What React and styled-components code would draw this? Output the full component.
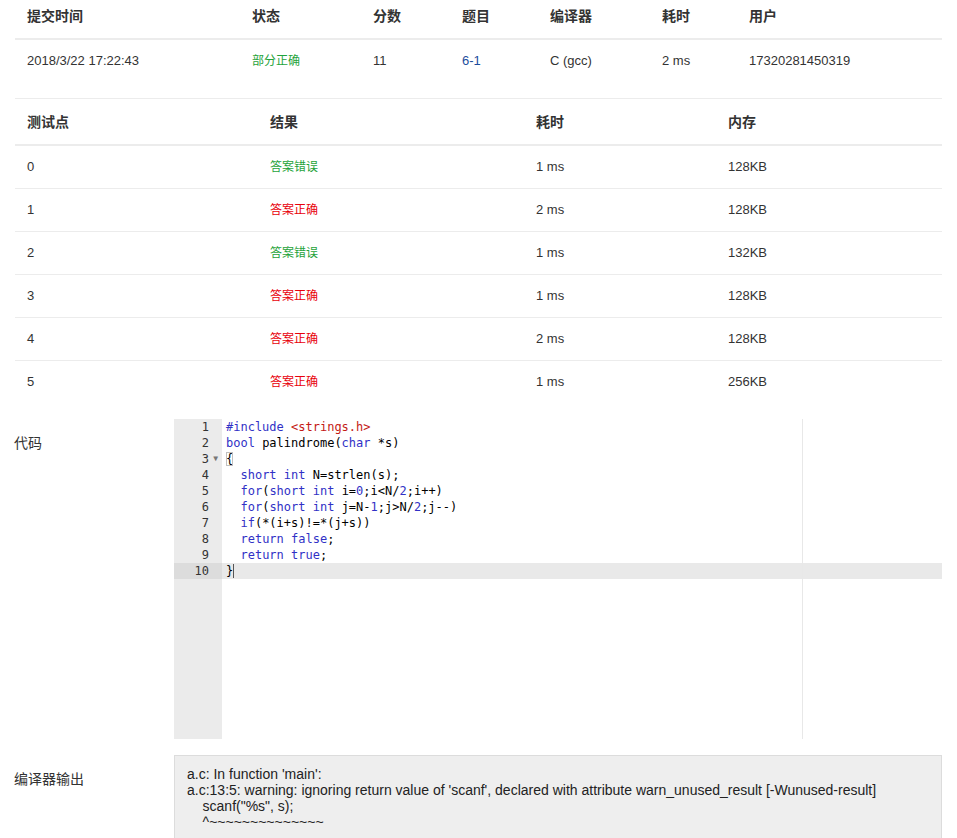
import React from "react";
import styled, { createGlobalStyle } from "styled-components";

const GlobalStyle = createGlobalStyle`
  body {
    margin: 0;
    background: #fff;
    font-family: "Liberation Sans", "Noto Sans CJK SC", sans-serif;
    color: #333;
  }
`;

const Page = styled.div`
  width: 927px;
  padding: 0 15px 40px;
`;

const Grid = styled.div`
  display: grid;
  grid-template-columns: ${(p) => p.cols};
`;

const HeadCell = styled.div`
  padding: ${(p) => p.pad};
  font-size: 14px;
  font-weight: 600;
  line-height: 20px;
  color: #333;
  border-bottom: 2px solid #ececec;
  white-space: nowrap;
`;

const Cell = styled.div`
  padding: ${(p) => p.pad};
  font-size: 13px;
  line-height: 20px;
  color: #333;
  border-bottom: ${(p) => (p.last ? "none" : "1px solid #ececec")};
  white-space: nowrap;
`;

const Status = styled.span`
  font-size: 12px;
  color: ${(p) => (p.tone === "red" ? "#e8000b" : "#1fa33b")};
`;

const Link = styled.a`
  color: #1c4d9c;
  text-decoration: none;
`;

const Section = styled.div`
  display: grid;
  grid-template-columns: 159px 1fr;
  margin-top: 16px;
`;

const Label = styled.div`
  padding-top: 14px;
  margin-left: -1px;
  font-size: 14px;
  line-height: 20px;
  color: #333;
`;

const Editor = styled.div`
  display: flex;
  height: 320px;
  background: #fff;
  font-family: "DejaVu Sans Mono", monospace;
  font-size: 12px;
`;

const Gutter = styled.div`
  width: 48px;
  flex: none;
  background: #ebebeb;
`;

const GutterCell = styled.div`
  position: relative;
  height: 16px;
  line-height: 16px;
  text-align: right;
  padding-right: 13px;
  color: #333;
  background: ${(p) => (p.active ? "#dcdcdc" : "transparent")};
`;

const Fold = styled.span`
  position: absolute;
  right: 4px;
  top: 0;
  font-size: 8px;
  color: #777;
`;

const CodeArea = styled.div`
  position: relative;
  flex: 1;
`;

const PrintMargin = styled.div`
  position: absolute;
  top: 0;
  bottom: 0;
  left: 580px;
  width: 1px;
  background: #e8e8e8;
`;

const Line = styled.div`
  height: 16px;
  line-height: 16px;
  padding-left: 4px;
  white-space: pre;
  color: #000;
  background: ${(p) => (p.active ? "#e9e9e9" : "transparent")};
`;

const Tok = styled.span`
  color: ${(p) =>
    p.k === "k" ? "#3131c6" : p.k === "s" ? "#c41a16" : p.k === "n" ? "#3131c6" : "#000"};
`;

const Bracket = styled.span`
  outline: 1px solid #c0c0c0;
  outline-offset: -1px;
`;

const Cursor = styled.span`
  display: inline-block;
  width: 0;
  height: 14px;
  vertical-align: -3px;
  border-left: 1px solid #555;
`;

const Output = styled.pre`
  margin: 0;
  min-height: 100px;
  padding: 10px 12px;
  background: #eee;
  border: 1px solid #dcdcdc;
  font-family: "Liberation Sans Narrow", "Liberation Sans", sans-serif;
  font-size: 14px;
  line-height: 16px;
  color: #222;
  white-space: pre-wrap;
`;

const summaryCols = "225px 121px 89px 88px 112px 87px 1fr";
const caseCols = "243px 266px 192px 1fr";

const code = [
  [["#include", "k"], " ", ["<strings.h>", "s"]],
  [["bool", "k"], " palindrome(", ["char", "k"], " *s)"],
  ["BRACKET"],
  ["  ", ["short", "k"], " ", ["int", "k"], " N=strlen(s);"],
  ["  ", ["for", "k"], "(", ["short", "k"], " ", ["int", "k"], " i=", ["0", "n"], ";i<N/", ["2", "n"], ";i++)"],
  ["  ", ["for", "k"], "(", ["short", "k"], " ", ["int", "k"], " j=N-", ["1", "n"], ";j>N/", ["2", "n"], ";j--)"],
  ["  ", ["if", "k"], "(*(i+s)!=*(j+s))"],
  ["  ", ["return", "k"], " ", ["false", "k"], ";"],
  ["  ", ["return", "k"], " ", ["true", "k"], ";"],
  ["}", "CURSOR"],
];

const cases = [
  ["0", "答案错误", "green", "1 ms", "128KB"],
  ["1", "答案正确", "red", "2 ms", "128KB"],
  ["2", "答案错误", "green", "1 ms", "132KB"],
  ["3", "答案正确", "red", "1 ms", "128KB"],
  ["4", "答案正确", "red", "2 ms", "128KB"],
  ["5", "答案正确", "red", "1 ms", "256KB"],
];

const renderTok = (t, i) => {
  if (t === "BRACKET") return <Bracket key={i}>{"{"}</Bracket>;
  if (t === "CURSOR") return <Cursor key={i} />;
  if (typeof t === "string") return <Tok key={i}>{t}</Tok>;
  return (
    <Tok key={i} k={t[1]}>
      {t[0]}
    </Tok>
  );
};

const outputText = `a.c: In function 'main':
a.c:13:5: warning: ignoring return value of 'scanf', declared with attribute warn_unused_result [-Wunused-result]
    scanf("%s", s);
    ^~~~~~~~~~~~~~~`;

export default function App() {
  const summaryHead = ["提交时间", "状态", "分数", "题目", "编译器", "耗时", "用户"];
  const rowPad = "11px 12px 27px";
  return (
    <Page>
      <GlobalStyle />
      <Grid cols={summaryCols}>
        {summaryHead.map((h) => (
          <HeadCell key={h} pad="6px 12px 12px">
            {h}
          </HeadCell>
        ))}
        <Cell pad={rowPad}>2018/3/22 17:22:43</Cell>
        <Cell pad={rowPad}>
          <Status tone="green">部分正确</Status>
        </Cell>
        <Cell pad={rowPad}>11</Cell>
        <Cell pad={rowPad}>
          <Link href="#">6-1</Link>
        </Cell>
        <Cell pad={rowPad}>C (gcc)</Cell>
        <Cell pad={rowPad}>2 ms</Cell>
        <Cell pad={rowPad}>17320281450319</Cell>
      </Grid>

      <Grid cols={caseCols}>
        {["测试点", "结果", "耗时", "内存"].map((h) => (
          <HeadCell key={h} pad="13px 12px 12px">
            {h}
          </HeadCell>
        ))}
        {cases.map(([id, res, tone, time, mem], i) => {
          const last = i === cases.length - 1;
          return (
            <React.Fragment key={id}>
              <Cell pad="11px 12px" last={last}>{id}</Cell>
              <Cell pad="11px 12px" last={last}>
                <Status tone={tone}>{res}</Status>
              </Cell>
              <Cell pad="11px 12px" last={last}>{time}</Cell>
              <Cell pad="11px 12px" last={last}>{mem}</Cell>
            </React.Fragment>
          );
        })}
      </Grid>

      <Section>
        <Label>代码</Label>
        <Editor>
          <Gutter>
            {code.map((_, i) => (
              <GutterCell key={i} active={i === code.length - 1}>
                {i + 1}
                {i === 2 && <Fold>▼</Fold>}
              </GutterCell>
            ))}
          </Gutter>
          <CodeArea>
            <PrintMargin />
            {code.map((line, i) => (
              <Line key={i} active={i === code.length - 1}>
                {line.map(renderTok)}
              </Line>
            ))}
          </CodeArea>
        </Editor>
      </Section>

      <Section>
        <Label>编译器输出</Label>
        <Output>{outputText}</Output>
      </Section>
    </Page>
  );
}
